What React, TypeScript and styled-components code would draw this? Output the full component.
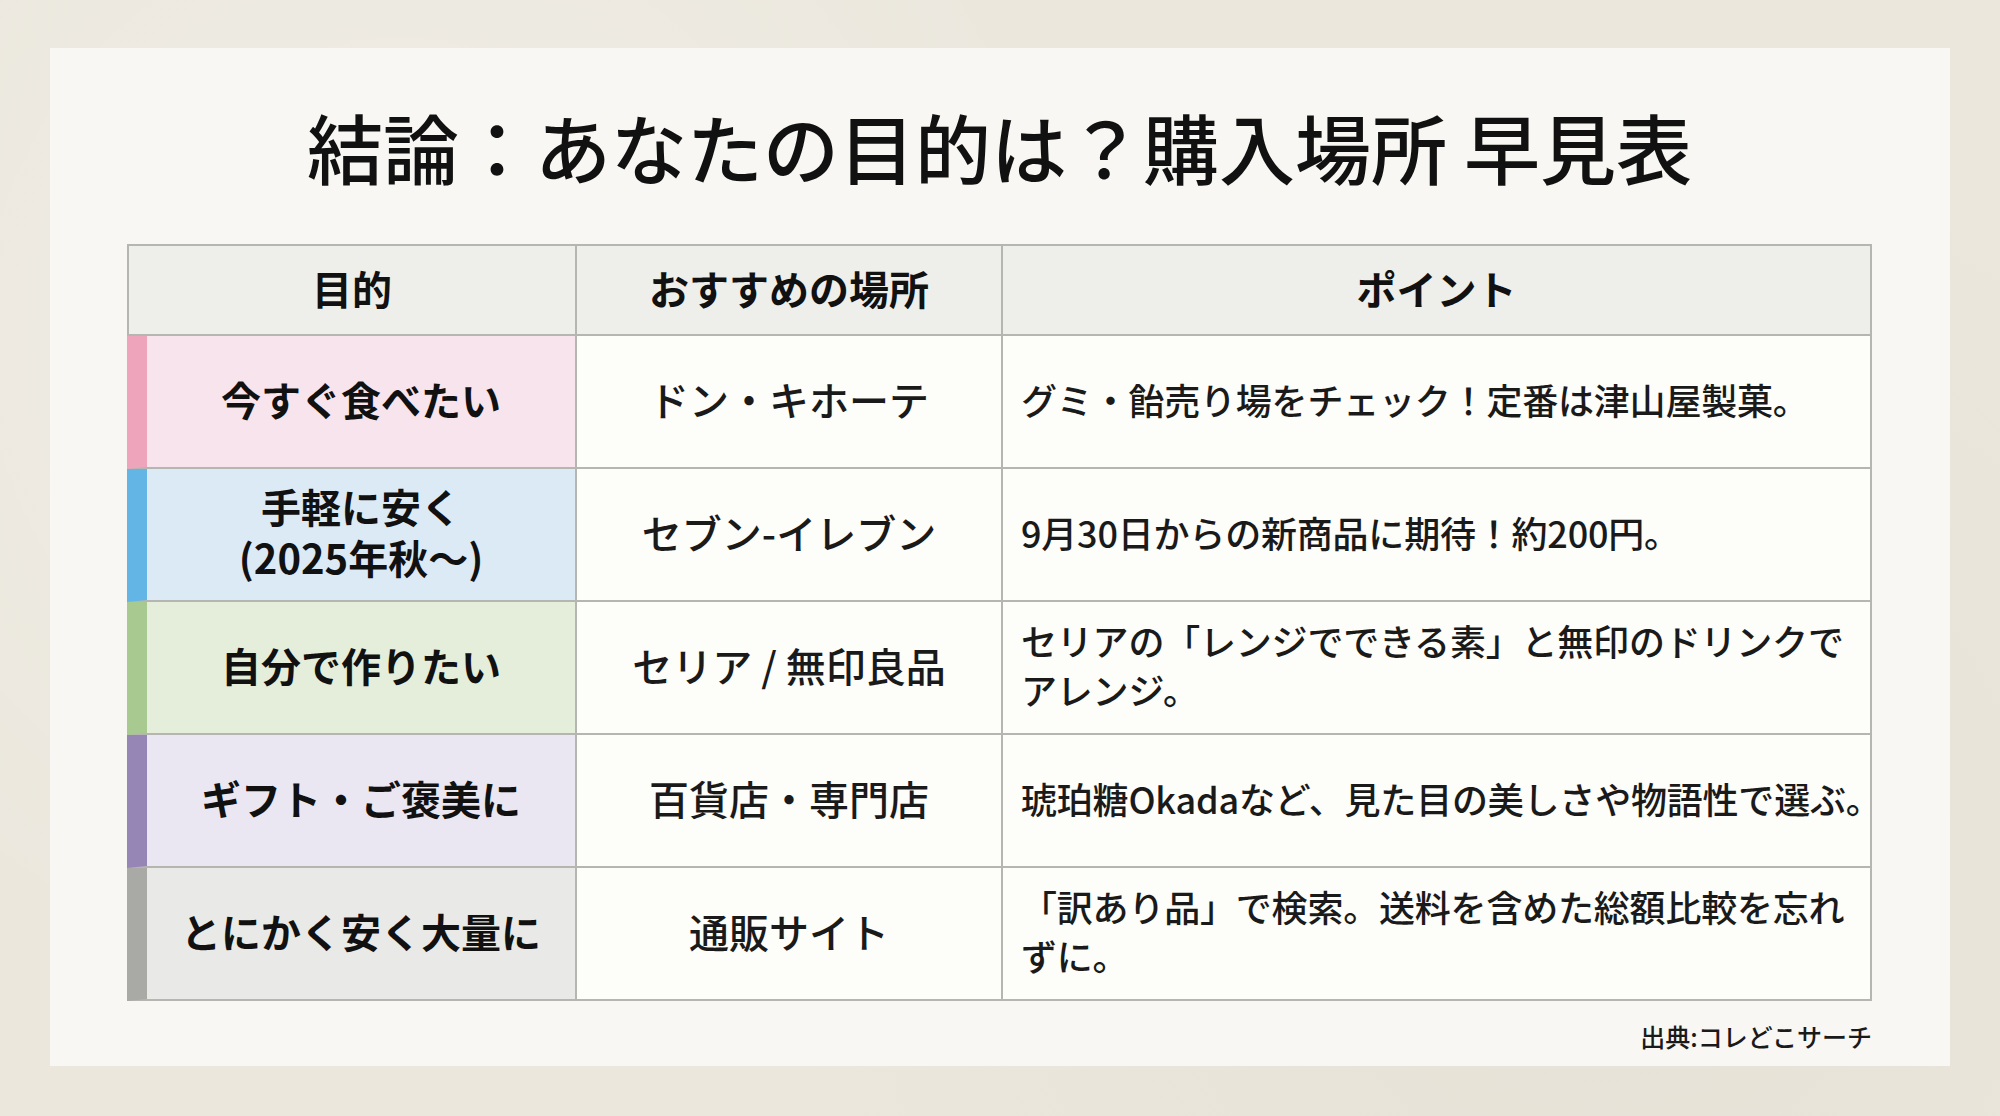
import React from "react";
import styled, { createGlobalStyle } from "styled-components";

const GlobalStyle = createGlobalStyle`
  html, body { margin: 0; padding: 0; }
  body {
    width: 2000px;
    height: 1116px;
    overflow: hidden;
    background: #ebe7dd;
    font-family: "Noto Sans CJK JP", "Noto Sans", sans-serif;
    color: #141414;
  }
`;

const Page = styled.div`
  box-sizing: border-box;
  width: 2000px;
  height: 1116px;
  padding: 48px 50px 50px 50px;
  background:
    radial-gradient(circle at 20% 30%, rgba(255,255,255,0.25), transparent 40%),
    radial-gradient(circle at 80% 80%, rgba(210,200,180,0.18), transparent 45%),
    #ebe7dd;
`;

const Card = styled.main`
  box-sizing: border-box;
  width: 1900px;
  height: 1018px;
  background: #f8f7f3;
  display: flex;
  flex-direction: column;
  padding: 0 78px 0 77px;
`;

const Title = styled.h1`
  margin: 60px 0 60px 0;
  height: 76px;
  font-family: "Noto Sans CJK JP", sans-serif;
  font-size: 76px;
  line-height: 76px;
  font-weight: 500;
  text-align: center;
  color: #111;
  letter-spacing: 0px;
  white-space: nowrap;
`;

const Grid = styled.div`
  display: grid;
  grid-template-columns: 448px 426px 1fr;
  grid-template-rows: 90px repeat(5, 133px);
  border-top: 2px solid #b5b5b2;
  border-left: 2px solid #b5b5b2;
`;

const Cell = styled.div`
  box-sizing: border-box;
  border-right: 2px solid #b5b5b2;
  border-bottom: 2px solid #b5b5b2;
  display: flex;
  align-items: center;
  min-width: 0;
  padding-bottom: 5px;
`;

const HeadCell = styled(Cell)`
  background: #eeeeeb;
  justify-content: center;
  font-size: 40px;
  font-weight: 700;
  color: #111;
`;

const PurposeCell = styled(Cell)<{ $stripe: string; $bg: string }>`
  background: ${(p) => p.$bg};
  border-left: 20px solid ${(p) => p.$stripe};
  margin-left: -2px;
  justify-content: center;
  text-align: center;
  font-size: 40px;
  line-height: 51px;
  font-weight: 700;
  color: #111;
`;

const PlaceCell = styled(Cell)`
  background: #fdfdf9;
  justify-content: center;
  font-size: 40px;
  font-weight: 500;
  color: #1a1a1a;
  white-space: nowrap;
`;

const PointCell = styled(Cell)`
  background: #fdfdf9;
  padding-left: 18px;
  font-size: 36px;
  line-height: 49px;
  font-weight: 500;
  letter-spacing: -0.2px;
  color: #1a1a1a;
  white-space: nowrap;
`;

const Source = styled.div`
  flex: 1;
  display: flex;
  align-items: center;
  justify-content: flex-end;
  padding-top: 4px;
  font-size: 25px;
  font-weight: 500;
  color: #1a1a1a;
`;

type Row = {
  purpose: React.ReactNode;
  stripe: string;
  bg: string;
  place: string;
  point: React.ReactNode;
};

const rows: Row[] = [
  {
    purpose: "今すぐ食べたい",
    stripe: "#eea5bc",
    bg: "#f8e4ec",
    place: "ドン・キホーテ",
    point: "グミ・飴売り場をチェック！定番は津山屋製菓。",
  },
  {
    purpose: (
      <>
        手軽に安く
        <br />
        (2025年秋〜)
      </>
    ),
    stripe: "#63b5e5",
    bg: "#dceaf6",
    place: "セブン-イレブン",
    point: "9月30日からの新商品に期待！約200円。",
  },
  {
    purpose: "自分で作りたい",
    stripe: "#a8c98f",
    bg: "#e4eedb",
    place: "セリア / 無印良品",
    point: (
      <>
        セリアの「レンジでできる素」と無印のドリンクで
        <br />
        アレンジ。
      </>
    ),
  },
  {
    purpose: "ギフト・ご褒美に",
    stripe: "#9686b5",
    bg: "#eae6f2",
    place: "百貨店・専門店",
    point: "琥珀糖Okadaなど、見た目の美しさや物語性で選ぶ。",
  },
  {
    purpose: "とにかく安く大量に",
    stripe: "#a9a9a6",
    bg: "#e9e9e7",
    place: "通販サイト",
    point: (
      <>
        「訳あり品」で検索。送料を含めた総額比較を忘れ
        <br />
        ずに。
      </>
    ),
  },
];

export default function App() {
  return (
    <>
      <GlobalStyle />
      <Page>
        <Card>
          <Title>結論：あなたの目的は？購入場所 早見表</Title>
          <Grid>
            <HeadCell>目的</HeadCell>
            <HeadCell>おすすめの場所</HeadCell>
            <HeadCell>ポイント</HeadCell>
            {rows.map((r, i) => (
              <React.Fragment key={i}>
                <PurposeCell $stripe={r.stripe} $bg={r.bg}>
                  <div>{r.purpose}</div>
                </PurposeCell>
                <PlaceCell>{r.place}</PlaceCell>
                <PointCell>
                  <div>{r.point}</div>
                </PointCell>
              </React.Fragment>
            ))}
          </Grid>
          <Source>出典:コレどこサーチ</Source>
        </Card>
      </Page>
    </>
  );
}
